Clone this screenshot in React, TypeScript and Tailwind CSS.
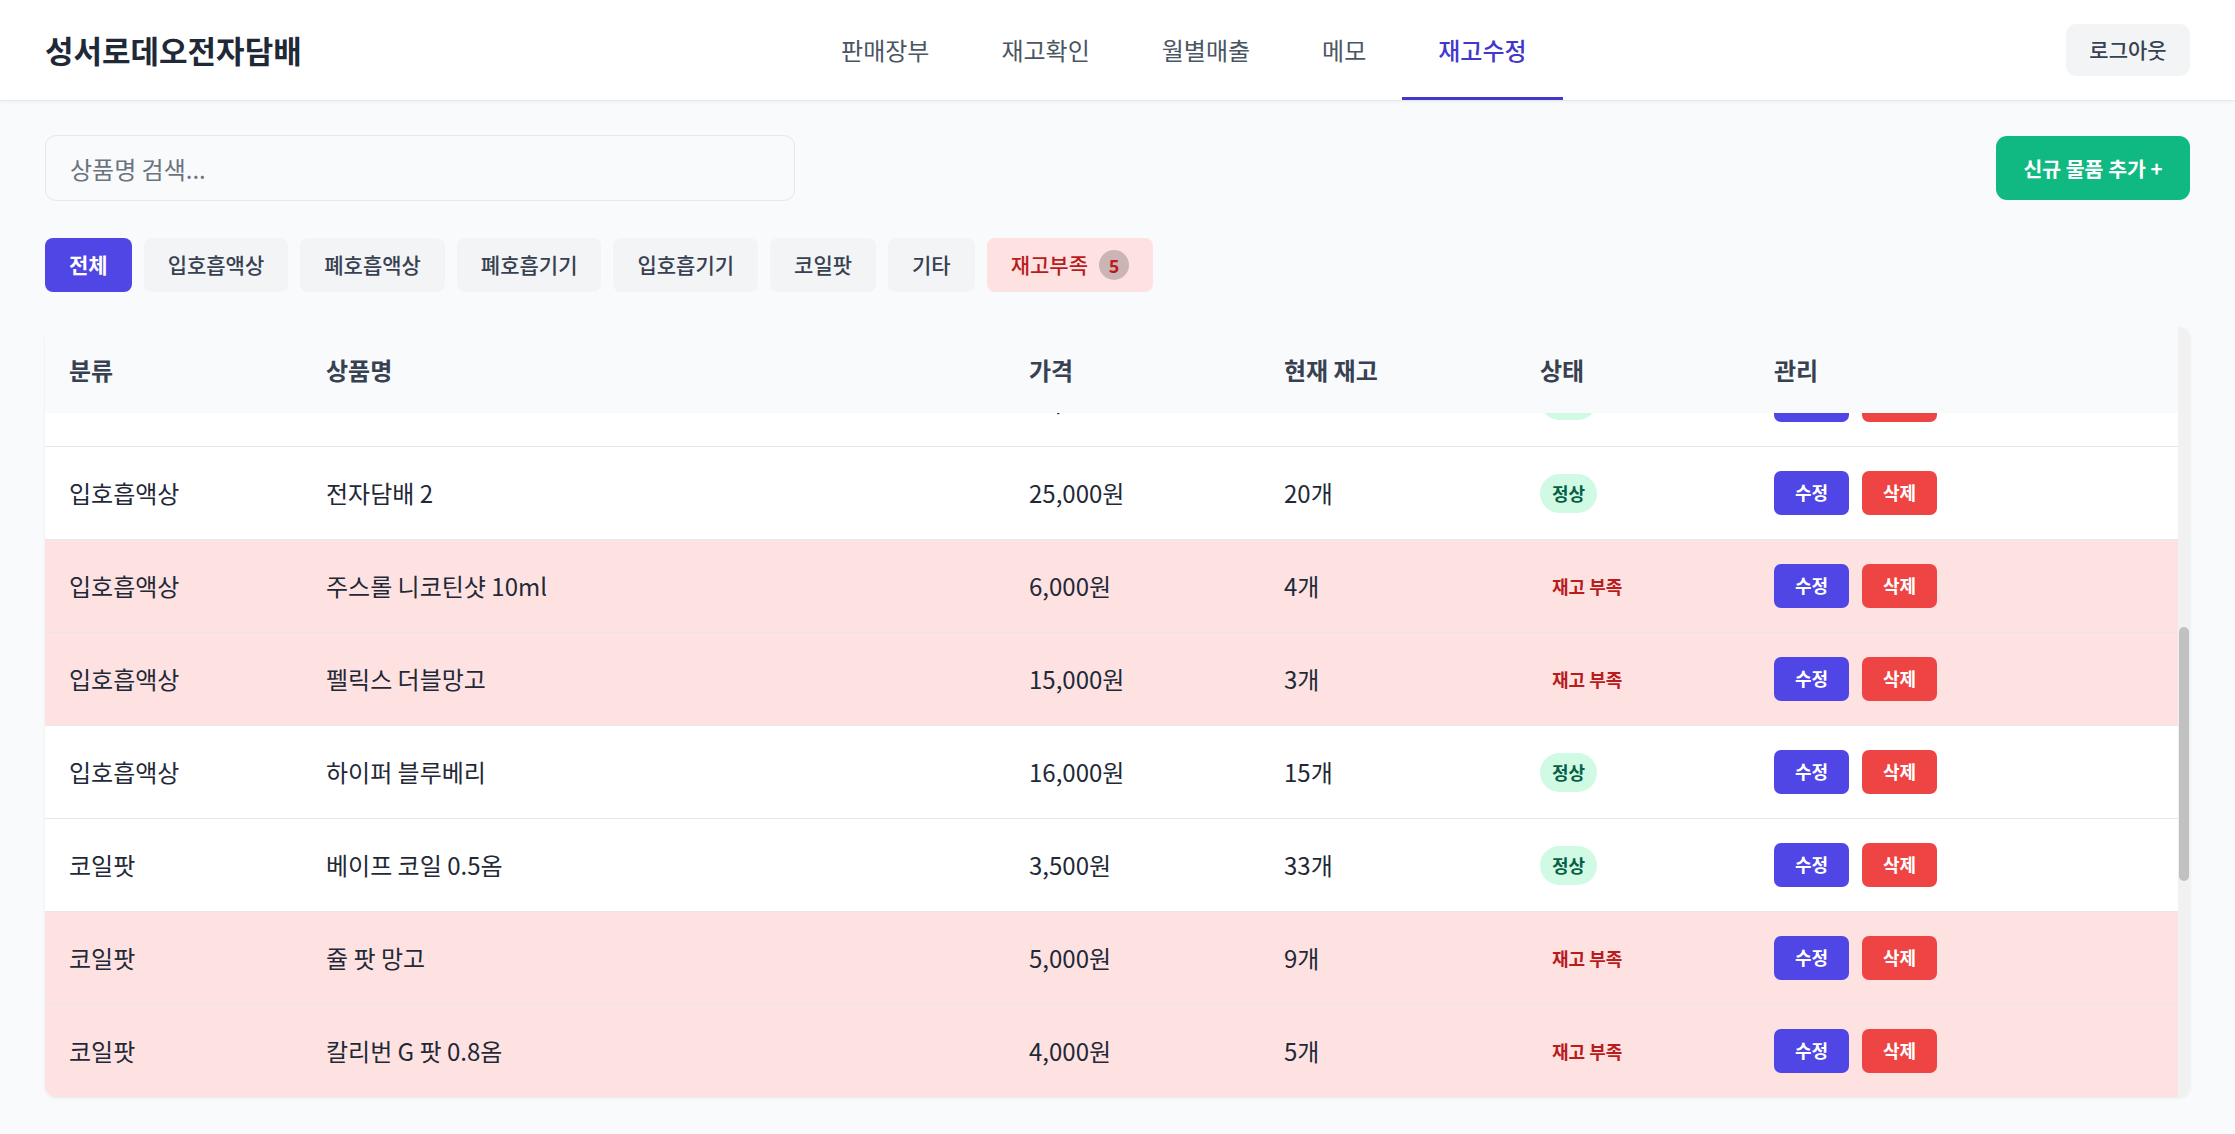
import React, { useEffect, useRef } from 'react';

type Item = {
  category: string;
  name: string;
  price: number;
  stock: number;
};

const items: Item[] = [
  { category: '기타', name: '일회용 라이터', price: 1000, stock: 50 },
  { category: '입호흡기기', name: '리프 버디', price: 35000, stock: 14 },
  { category: '입호흡기기', name: '칼리번 G2', price: 32000, stock: 2 },
  { category: '입호흡기기', name: '젤로 나노', price: 28000, stock: 12 },
  { category: '입호흡액상', name: '전자담배 1', price: 20000, stock: 30 },
  { category: '입호흡액상', name: '그린 애플', price: 15000, stock: 18 },
  { category: '입호흡액상', name: '복숭아 아이스', price: 16000, stock: 21 },
  { category: '입호흡액상', name: '리치 쿨', price: 15000, stock: 17 },
  { category: '입호흡액상', name: '타바코 클래식', price: 17000, stock: 25 },
  { category: '입호흡액상', name: '쿨 민트', price: 18000, stock: 22 },
  { category: '입호흡액상', name: '전자담배 2', price: 25000, stock: 20 },
  { category: '입호흡액상', name: '주스롤 니코틴샷 10ml', price: 6000, stock: 4 },
  { category: '입호흡액상', name: '펠릭스 더블망고', price: 15000, stock: 3 },
  { category: '입호흡액상', name: '하이퍼 블루베리', price: 16000, stock: 15 },
  { category: '코일팟', name: '베이프 코일 0.5옴', price: 3500, stock: 33 },
  { category: '코일팟', name: '쥴 팟 망고', price: 5000, stock: 9 },
  { category: '코일팟', name: '칼리번 G 팟 0.8옴', price: 4000, stock: 5 },
  { category: '코일팟', name: '드래그 코일 0.3옴', price: 4500, stock: 26 },
  { category: '폐호흡기기', name: '드래그 X', price: 45000, stock: 11 },
  { category: '폐호흡기기', name: '아르거스 GT', price: 52000, stock: 13 },
  { category: '폐호흡액상', name: '수박 쿨 60ml', price: 22000, stock: 19 },
  { category: '폐호흡액상', name: '망고 아이스 60ml', price: 22000, stock: 16 },
  { category: '폐호흡액상', name: '블루 라즈 60ml', price: 23000, stock: 24 },
  { category: '폐호흡액상', name: '멘솔 60ml', price: 21000, stock: 28 },
];

const navItems = ['판매장부', '재고확인', '월별매출', '메모', '재고수정'];
const tabs = ['전체', '입호흡액상', '폐호흡액상', '폐호흡기기', '입호흡기기', '코일팟', '기타'];

const App: React.FC = () => {
  const scrollRef = useRef<HTMLDivElement>(null);

  useEffect(() => {
    if (scrollRef.current) scrollRef.current.scrollTop = 897;
  }, []);

  const lowCount = items.filter((i) => i.stock < 10).length;

  return (
    <div className="min-h-screen bg-[#f9fafb] font-['Noto_Sans_CJK_KR','Noto_Sans',sans-serif] text-[#1f2937]">
      {/* header */}
      <header className="h-[101px] bg-white border-b border-[#e5e7eb] shadow-[0_1px_3px_rgba(0,0,0,0.05)] flex items-center justify-between px-[45px]">
        <h1 className="text-[31px] font-bold text-[#1f2937]">성서로데오전자담배</h1>
        <nav className="flex h-full">
          {navItems.map((label) => (
            <a
              key={label}
              className={`h-full flex items-center px-[36px] text-[24px] border-b-[3px] pt-[3px] ${
                label === '재고수정'
                  ? 'border-[#4338ca] text-[#4338ca] font-medium'
                  : 'border-transparent text-[#4b5563]'
              }`}
            >
              {label}
            </a>
          ))}
        </nav>
        <button className="w-[124px] h-[52px] rounded-[10px] bg-[#f3f4f6] text-[21px] font-medium text-[#374151]">
          로그아웃
        </button>
      </header>

      <main className="px-[45px] pt-[34px]">
        {/* search + add */}
        <div className="flex items-center justify-between">
          <input
            placeholder="상품명 검색..."
            className="w-[750px] h-[66px] rounded-[11px] border border-[#e5e7eb] bg-[#f9fafb] px-[24px] text-[24px] placeholder:text-[#6b7280] outline-none"
          />
          <button className="w-[194px] h-[64px] rounded-[11px] bg-[#10b981] text-white text-[20.5px] font-bold">
            신규 물품 추가 +
          </button>
        </div>

        {/* filter tabs */}
        <div className="flex gap-[12px] mt-[37px]">
          {tabs.map((t) => (
            <button
              key={t}
              className={`h-[54px] px-[24px] rounded-[8px] text-[21px] ${
                t === '전체'
                  ? 'bg-[#4f46e5] text-white font-bold'
                  : 'bg-[#f3f4f6] text-[#374151] font-medium'
              }`}
            >
              {t}
            </button>
          ))}
          <button className="h-[54px] px-[24px] rounded-[8px] bg-[#fee2e2] text-[#b91c1c] text-[21px] font-medium flex items-center gap-[11px]">
            재고부족
            <span className="w-[30px] h-[30px] rounded-full bg-black/20 flex items-center justify-center text-[18px] font-bold text-[#b91c1c]">
              {lowCount}
            </span>
          </button>
        </div>

        {/* table card */}
        <div className="mt-[35px] h-[770px] flex overflow-hidden rounded-[11px] bg-white shadow-[0_1px_3px_rgba(0,0,0,0.08)]">
          <div ref={scrollRef} className="flex-1 overflow-y-auto [scrollbar-width:none]">
            <table className="w-full table-fixed border-collapse text-left">
              <colgroup>
                <col className="w-[257px]" />
                <col className="w-[703px]" />
                <col className="w-[255px]" />
                <col className="w-[256px]" />
                <col className="w-[234px]" />
                <col />
              </colgroup>
              <thead>
                <tr>
                  {['분류', '상품명', '가격', '현재 재고', '상태', '관리'].map((h) => (
                    <th
                      key={h}
                      className="sticky top-0 z-10 h-[86px] bg-[#f9fafb] pl-[24px] text-[24px] font-bold text-[#374151]"
                    >
                      {h}
                    </th>
                  ))}
                </tr>
              </thead>
              <tbody>
                {items.map((item, i) => {
                  const low = item.stock < 10;
                  return (
                    <tr
                      key={i}
                      className={`h-[93px] border-t border-[#e5e7eb] text-[24px] text-[#1f2937] ${
                        low ? 'bg-[#fee2e2]' : 'bg-white'
                      }`}
                    >
                      <td className="pl-[24px]">{item.category}</td>
                      <td className="pl-[24px]">{item.name}</td>
                      <td className="pl-[24px]">{item.price.toLocaleString('en-US')}원</td>
                      <td className="pl-[24px]">{item.stock}개</td>
                      <td className="pl-[24px]">
                        <span
                          className={`inline-flex items-center h-[39px] px-[12px] rounded-full text-[18px] font-bold ${
                            low ? 'bg-[#fee2e2] text-[#b91c1c]' : 'bg-[#d1fae5] text-[#065f46]'
                          }`}
                        >
                          {low ? '재고 부족' : '정상'}
                        </span>
                      </td>
                      <td className="pl-[24px]">
                        <div className="flex gap-[13px]">
                          <button className="w-[75px] h-[44px] rounded-[7px] bg-[#4f46e5] text-white text-[18px] font-bold">
                            수정
                          </button>
                          <button className="w-[75px] h-[44px] rounded-[7px] bg-[#ef4444] text-white text-[18px] font-bold">
                            삭제
                          </button>
                        </div>
                      </td>
                    </tr>
                  );
                })}
              </tbody>
            </table>
          </div>
          {/* scrollbar track */}
          <div className="w-[12px] shrink-0 bg-[#f1f1f1] pt-[300px]">
            <div className="h-[254px] mx-[1px] rounded-full bg-[#c1c1c1]" />
          </div>
        </div>
      </main>
    </div>
  );
};

export default App;
